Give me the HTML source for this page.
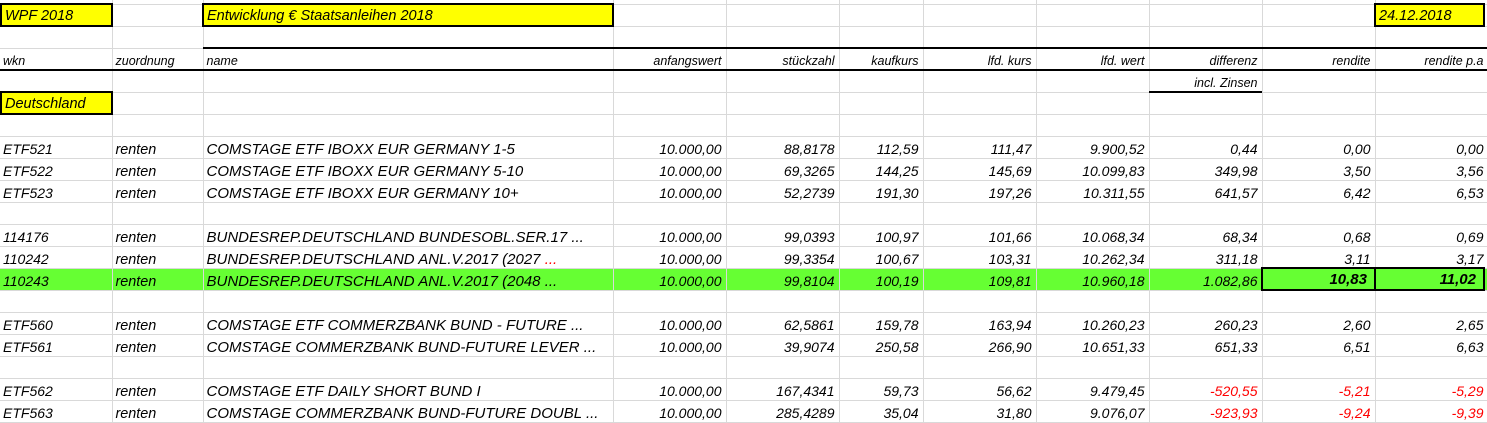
<!DOCTYPE html>
<html><head><meta charset="utf-8"><style>
body{margin:0;width:1487px;height:418px;overflow:hidden;background:#fff;position:relative;font-family:"Liberation Sans",Arial,sans-serif;font-style:italic;}
table{position:absolute;left:0;top:-18px;border-collapse:collapse;table-layout:fixed;width:1488px;}
td{height:17px;padding:4px 4px 0 3px;border:1px solid #d9d9d9;font-size:14px;white-space:nowrap;overflow:hidden;vertical-align:baseline;line-height:16px;color:#000;}
td:first-child{border-left:none}
td:nth-child(3){font-size:15px}
td:nth-child(2){font-size:14.4px}
.r{text-align:right}
.h td{font-size:12.5px !important}
.g td{background:#66ff33}
.red{color:#f00}
.box{position:absolute;background:#ff0;border:2px solid #000;box-sizing:border-box;font-size:14.5px;line-height:20px;padding-left:3px;padding-top:1px}
.line{position:absolute;background:#000;height:2px}
.bb{position:absolute;border:2px solid #000;box-sizing:border-box;background:#66ff33;font-weight:bold;text-align:right;font-size:15px;line-height:20px;padding-right:7px;padding-top:1px}
</style></head><body>
<table>
<colgroup><col style="width:112px"><col style="width:91px"><col style="width:410px"><col style="width:113px"><col style="width:113px"><col style="width:84px"><col style="width:113px"><col style="width:113px"><col style="width:113px"><col style="width:113px"><col style="width:113px"></colgroup>
<tr><td></td><td></td><td></td><td></td><td></td><td></td><td></td><td></td><td></td><td></td><td></td></tr>
<tr><td></td><td></td><td></td><td></td><td></td><td></td><td></td><td></td><td></td><td></td><td></td></tr>
<tr><td></td><td></td><td></td><td></td><td></td><td></td><td></td><td></td><td></td><td></td><td></td></tr>
<tr class="h"><td>wkn</td><td>zuordnung</td><td>name</td><td class="r">anfangswert</td><td class="r">stückzahl</td><td class="r">kaufkurs</td><td class="r">lfd. kurs</td><td class="r">lfd. wert</td><td class="r">differenz</td><td class="r">rendite</td><td class="r">rendite p.a</td></tr>
<tr class="h"><td></td><td></td><td></td><td></td><td></td><td></td><td></td><td></td><td class="r">incl. Zinsen</td><td></td><td></td></tr>
<tr><td></td><td></td><td></td><td></td><td></td><td></td><td></td><td></td><td></td><td></td><td></td></tr>
<tr><td></td><td></td><td></td><td></td><td></td><td></td><td></td><td></td><td></td><td></td><td></td></tr>
<tr><td>ETF521</td><td>renten</td><td>COMSTAGE ETF IBOXX EUR GERMANY 1-5</td><td class="r">10.000,00</td><td class="r">88,8178</td><td class="r">112,59</td><td class="r">111,47</td><td class="r">9.900,52</td><td class="r">0,44</td><td class="r">0,00</td><td class="r">0,00</td></tr>
<tr><td>ETF522</td><td>renten</td><td>COMSTAGE ETF IBOXX EUR GERMANY 5-10</td><td class="r">10.000,00</td><td class="r">69,3265</td><td class="r">144,25</td><td class="r">145,69</td><td class="r">10.099,83</td><td class="r">349,98</td><td class="r">3,50</td><td class="r">3,56</td></tr>
<tr><td>ETF523</td><td>renten</td><td>COMSTAGE ETF IBOXX EUR GERMANY 10+</td><td class="r">10.000,00</td><td class="r">52,2739</td><td class="r">191,30</td><td class="r">197,26</td><td class="r">10.311,55</td><td class="r">641,57</td><td class="r">6,42</td><td class="r">6,53</td></tr>
<tr><td></td><td></td><td></td><td></td><td></td><td></td><td></td><td></td><td></td><td></td><td></td></tr>
<tr><td>114176</td><td>renten</td><td>BUNDESREP.DEUTSCHLAND BUNDESOBL.SER.17 ...</td><td class="r">10.000,00</td><td class="r">99,0393</td><td class="r">100,97</td><td class="r">101,66</td><td class="r">10.068,34</td><td class="r">68,34</td><td class="r">0,68</td><td class="r">0,69</td></tr>
<tr><td>110242</td><td>renten</td><td>BUNDESREP.DEUTSCHLAND ANL.V.2017 (2027 <span class="red">...</span></td><td class="r">10.000,00</td><td class="r">99,3354</td><td class="r">100,67</td><td class="r">103,31</td><td class="r">10.262,34</td><td class="r">311,18</td><td class="r">3,11</td><td class="r">3,17</td></tr>
<tr class="g"><td>110243</td><td>renten</td><td>BUNDESREP.DEUTSCHLAND ANL.V.2017 (2048 ...</td><td class="r">10.000,00</td><td class="r">99,8104</td><td class="r">100,19</td><td class="r">109,81</td><td class="r">10.960,18</td><td class="r">1.082,86</td><td class="r"></td><td class="r"></td></tr>
<tr><td></td><td></td><td></td><td></td><td></td><td></td><td></td><td></td><td></td><td></td><td></td></tr>
<tr><td>ETF560</td><td>renten</td><td>COMSTAGE ETF COMMERZBANK BUND - FUTURE ...</td><td class="r">10.000,00</td><td class="r">62,5861</td><td class="r">159,78</td><td class="r">163,94</td><td class="r">10.260,23</td><td class="r">260,23</td><td class="r">2,60</td><td class="r">2,65</td></tr>
<tr><td>ETF561</td><td>renten</td><td>COMSTAGE COMMERZBANK BUND-FUTURE LEVER ...</td><td class="r">10.000,00</td><td class="r">39,9074</td><td class="r">250,58</td><td class="r">266,90</td><td class="r">10.651,33</td><td class="r">651,33</td><td class="r">6,51</td><td class="r">6,63</td></tr>
<tr><td></td><td></td><td></td><td></td><td></td><td></td><td></td><td></td><td></td><td></td><td></td></tr>
<tr><td>ETF562</td><td>renten</td><td>COMSTAGE ETF DAILY SHORT BUND I</td><td class="r">10.000,00</td><td class="r">167,4341</td><td class="r">59,73</td><td class="r">56,62</td><td class="r">9.479,45</td><td class="r red">-520,55</td><td class="r red">-5,21</td><td class="r red">-5,29</td></tr>
<tr><td>ETF563</td><td>renten</td><td>COMSTAGE COMMERZBANK BUND-FUTURE DOUBL ...</td><td class="r">10.000,00</td><td class="r">285,4289</td><td class="r">35,04</td><td class="r">31,80</td><td class="r">9.076,07</td><td class="r red">-923,93</td><td class="r red">-9,24</td><td class="r red">-9,39</td></tr>
</table>
<div class="box" style="left:0;top:3px;width:113px;height:24px">WPF 2018</div>
<div class="box" style="left:202px;top:3px;width:412px;height:24px">Entwicklung € Staatsanleihen 2018</div>
<div class="box" style="left:1374px;top:3px;width:111px;height:24px">24.12.2018</div>
<div class="box" style="left:0;top:91px;width:113px;height:24px">Deutschland</div>
<div class="line" style="left:203px;top:47px;width:1284px"></div>
<div class="line" style="left:0;top:69px;width:1487px"></div>
<div class="line" style="left:1149px;top:91px;width:113px"></div>
<div class="bb" style="left:1261px;top:267px;width:115px;height:24px">10,83</div>
<div class="bb" style="left:1374px;top:267px;width:111px;height:24px">11,02</div>
</body></html>
